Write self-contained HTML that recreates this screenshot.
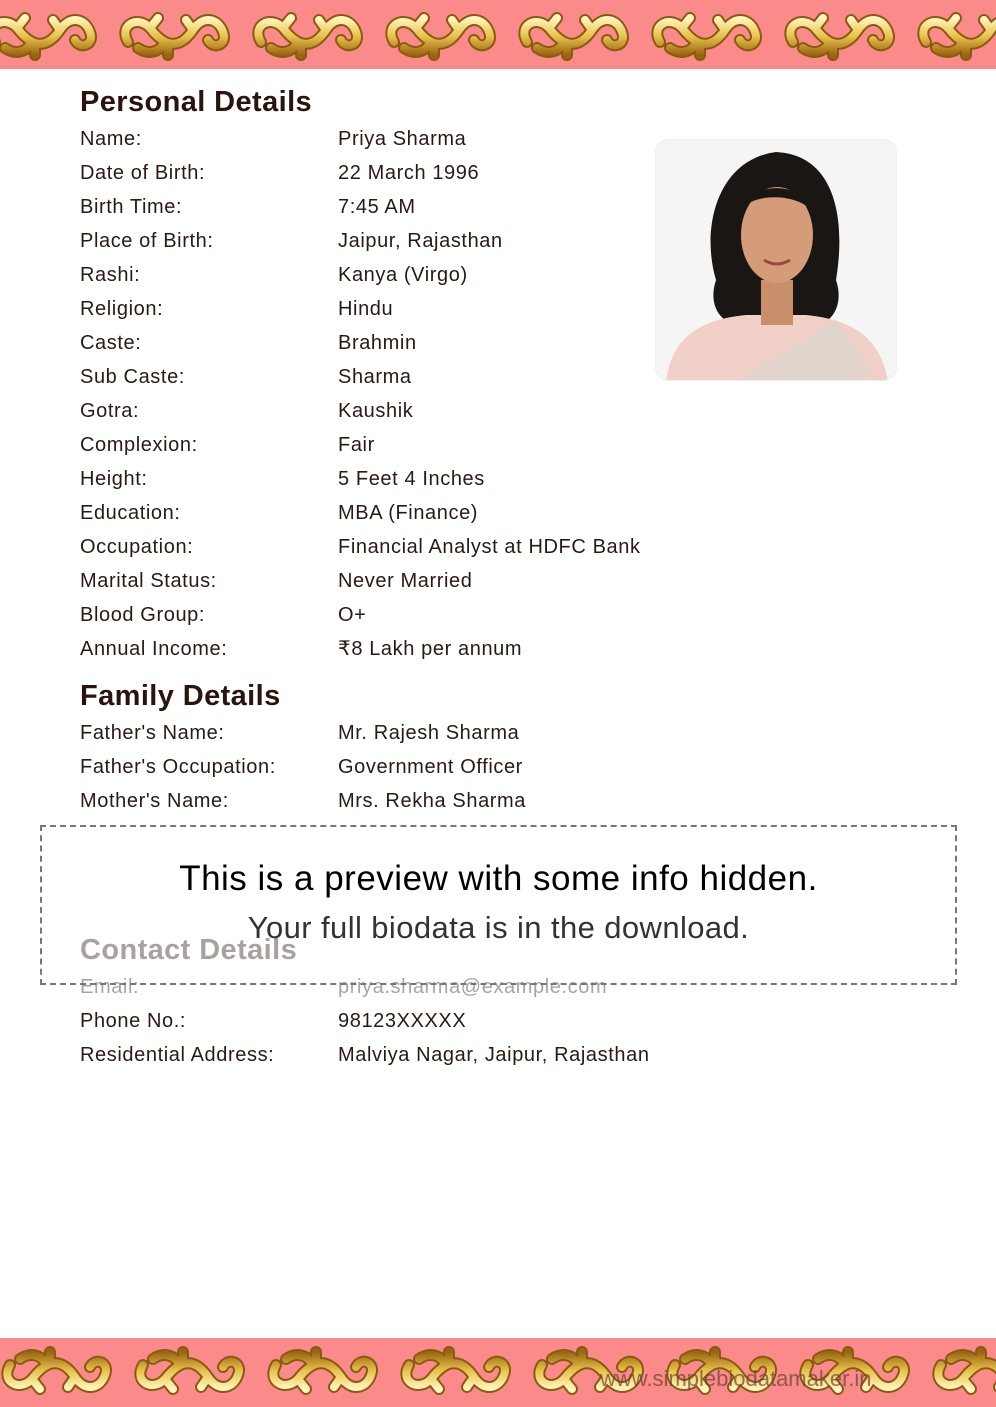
<!DOCTYPE html>
<html><head><meta charset="utf-8"><style>
*{margin:0;padding:0;box-sizing:border-box}
body{width:996px;height:1407px;background:#fff;font-family:"Liberation Sans",sans-serif;position:relative;overflow:hidden;color:#2a1a12}
.band{position:absolute;left:0;width:996px;height:69px;background:#fb8a8a}
.row{position:absolute;left:80px;font-size:20px;line-height:24px;white-space:nowrap;letter-spacing:.6px;margin-top:1px}
.row span{position:absolute;left:258px}
.h{position:absolute;left:80px;font-size:29px;font-weight:bold;color:#2a140c;line-height:32px;letter-spacing:.4px}
</style></head><body>
<svg class="band" style="top:0" width="996" height="69"><defs>
<linearGradient id="g" x1="0" y1="0" x2="0" y2="1"><stop offset="0" stop-color="#fff6c0"/><stop offset=".5" stop-color="#e7c24a"/><stop offset="1" stop-color="#9a6410"/></linearGradient>
<pattern id="p" width="133" height="69" patternUnits="userSpaceOnUse" x="-25">
<path d="M20,42 C10,25 30,15 42,28 C55,45 70,52 85,30 C95,15 110,18 115,32 C120,45 105,50 100,40 M42,28 L50,18 M85,30 L78,20 M60,45 L60,55 M30,48 C40,55 50,52 55,45" fill="none" stroke="#8a5a10" stroke-width="12" stroke-linecap="round"/>
<path d="M20,42 C10,25 30,15 42,28 C55,45 70,52 85,30 C95,15 110,18 115,32 C120,45 105,50 100,40 M42,28 L50,18 M85,30 L78,20 M60,45 L60,55 M30,48 C40,55 50,52 55,45" fill="none" stroke="url(#g)" stroke-width="8" stroke-linecap="round"/>
</pattern></defs><rect width="996" height="69" fill="#fb8a8a"/><rect width="996" height="69" fill="url(#p)"/></svg>
<svg class="band" style="top:1338px" width="996" height="69"><defs><pattern id="p2" width="133" height="69" patternUnits="userSpaceOnUse" x="-10" patternTransform="scale(1,-1) translate(0,-69)">
<path d="M20,42 C10,25 30,15 42,28 C55,45 70,52 85,30 C95,15 110,18 115,32 C120,45 105,50 100,40 M42,28 L50,18 M85,30 L78,20 M60,45 L60,55 M30,48 C40,55 50,52 55,45" fill="none" stroke="#8a5a10" stroke-width="12" stroke-linecap="round"/>
<path d="M20,42 C10,25 30,15 42,28 C55,45 70,52 85,30 C95,15 110,18 115,32 C120,45 105,50 100,40 M42,28 L50,18 M85,30 L78,20 M60,45 L60,55 M30,48 C40,55 50,52 55,45" fill="none" stroke="url(#g)" stroke-width="8" stroke-linecap="round"/>
</pattern></defs><rect width="996" height="69" fill="#fb8a8a"/><rect width="996" height="69" fill="url(#p2)"/>
<text x="600" y="48" font-family="Liberation Sans" font-size="22" fill="#6a4030" opacity=".7">www.simplebiodatamaker.in</text></svg>

<div class="h" style="top:86px">Personal Details</div>
<div class="row" style="top:126px">Name:<span>Priya Sharma</span></div>
<div class="row" style="top:160px">Date of Birth:<span>22 March 1996</span></div>
<div class="row" style="top:194px">Birth Time:<span>7:45 AM</span></div>
<div class="row" style="top:228px">Place of Birth:<span>Jaipur, Rajasthan</span></div>
<div class="row" style="top:262px">Rashi:<span>Kanya (Virgo)</span></div>
<div class="row" style="top:296px">Religion:<span>Hindu</span></div>
<div class="row" style="top:330px">Caste:<span>Brahmin</span></div>
<div class="row" style="top:364px">Sub Caste:<span>Sharma</span></div>
<div class="row" style="top:398px">Gotra:<span>Kaushik</span></div>
<div class="row" style="top:432px">Complexion:<span>Fair</span></div>
<div class="row" style="top:466px">Height:<span>5 Feet 4 Inches</span></div>
<div class="row" style="top:500px">Education:<span>MBA (Finance)</span></div>
<div class="row" style="top:534px">Occupation:<span>Financial Analyst at HDFC Bank</span></div>
<div class="row" style="top:568px">Marital Status:<span>Never Married</span></div>
<div class="row" style="top:602px">Blood Group:<span>O+</span></div>
<div class="row" style="top:636px">Annual Income:<span>₹8 Lakh per annum</span></div>
<div class="h" style="top:680px">Family Details</div>
<div class="row" style="top:720px">Father's Name:<span>Mr. Rajesh Sharma</span></div>
<div class="row" style="top:754px">Father's Occupation:<span>Government Officer</span></div>
<div class="row" style="top:788px">Mother's Name:<span>Mrs. Rekha Sharma</span></div>
<div class="h" style="top:934px">Contact Details</div>
<div class="row" style="top:974px">Email:<span>priya.sharma@example.com</span></div>
<div class="row" style="top:1008px">Phone No.:<span>98123XXXXX</span></div>
<div class="row" style="top:1042px">Residential Address:<span>Malviya Nagar, Jaipur, Rajasthan</span></div>

<div style="position:absolute;left:655px;top:139px;width:242px;height:242px;border:1px solid #eee;border-radius:14px;overflow:hidden;background:#f6f6f6">
<svg width="242" height="242" viewBox="0 0 242 242">
<rect width="242" height="242" fill="#f5f5f5"/>
<path d="M60,140 C45,90 60,20 120,12 C180,15 190,80 180,140 C190,170 170,190 150,185 L95,185 C70,190 50,170 60,140Z" fill="#1a1614"/>
<path d="M10,242 C15,200 40,180 90,175 L150,175 C200,180 225,200 232,242Z" fill="#f1d0c8"/>
<path d="M80,242 L180,180 L215,230 L200,242Z" fill="#e0d4cc"/>
<rect x="105" y="140" width="32" height="45" fill="#c98e6a"/>
<ellipse cx="121" cy="95" rx="36" ry="48" fill="#d49c78"/>
<path d="M85,70 C95,40 150,40 158,75 C150,55 100,50 85,70Z" fill="#1a1614"/>
<path d="M108,120 Q121,128 134,120" stroke="#9a4a3a" stroke-width="3" fill="none"/>
</svg></div>

<div style="position:absolute;left:0;top:809px;width:996px;height:16px;background:#fff"></div>
<div style="position:absolute;left:0;top:825px;width:996px;height:175px;background:rgba(255,255,255,.6)"></div>
<div style="position:absolute;left:40px;top:825px;width:917px;height:160px;border:2px dashed #777"></div>
<div style="position:absolute;left:40px;top:859px;width:917px;text-align:center;font-size:35px;color:#000;letter-spacing:.5px">This is a preview with some info hidden.</div>
<div style="position:absolute;left:40px;top:910px;width:917px;text-align:center;font-size:31px;color:#333;letter-spacing:.4px">Your full biodata is in the download.</div>
</body></html>
